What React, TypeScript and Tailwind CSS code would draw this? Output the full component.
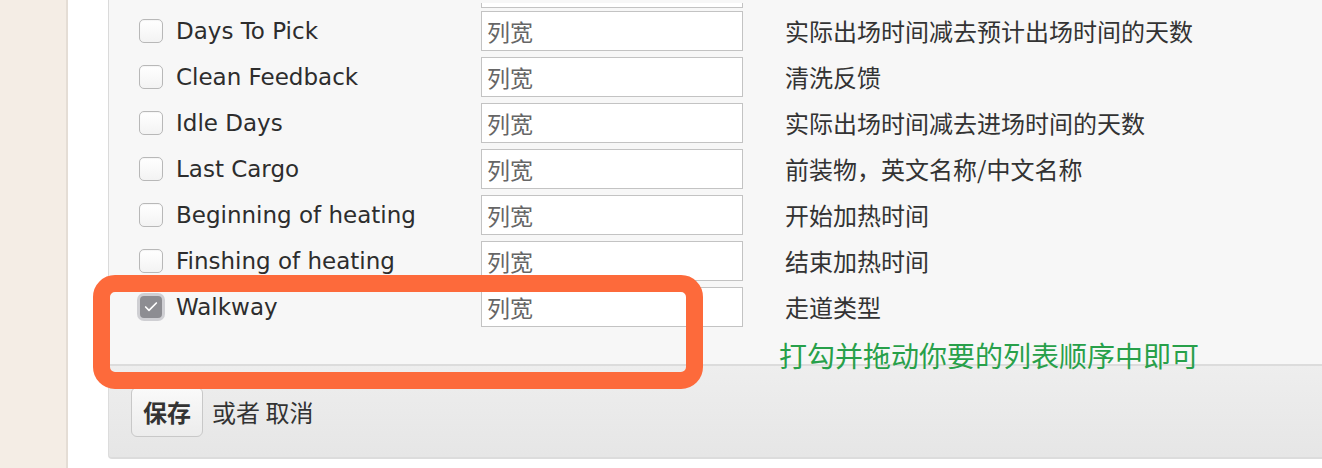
import { Check } from "lucide-react";

const rows = [
	{ label: "Days To Pick", desc: "实际出场时间减去预计出场时间的天数", checked: false },
	{ label: "Clean Feedback", desc: "清洗反馈", checked: false },
	{ label: "Idle Days", desc: "实际出场时间减去进场时间的天数", checked: false },
	{ label: "Last Cargo", desc: "前装物，英文名称/中文名称", checked: false },
	{ label: "Beginning of heating", desc: "开始加热时间", checked: false },
	{ label: "Finshing of heating", desc: "结束加热时间", checked: false },
	{ label: "Walkway", desc: "走道类型", checked: true },
];

const cjk = "font-['Noto_Sans_CJK_SC',sans-serif]";

function Box({ checked }: { checked: boolean }) {
	if (checked) {
		return (
			<span className="flex h-[28px] w-[28px] shrink-0 items-center justify-center rounded-[7px] border-[3px] border-[#cfcfd3] bg-[#8d8d92]">
				<Check className="h-[16px] w-[16px] text-white" strokeWidth={2.5} />
			</span>
		);
	}
	return (
		<span className="block h-[24px] w-[24px] shrink-0 rounded-[5px] border border-[#b8b8b8] bg-gradient-to-b from-white to-[#f3f3f3] shadow-[inset_0_1px_1px_rgba(0,0,0,0.04)]" />
	);
}

export default function App() {
	return (
		<div className="relative h-[468px] w-[1322px] overflow-hidden bg-white">
			<div className="flex h-full">
				{/* beige side */}
				<div className="w-[66px] shrink-0 bg-[#f4ede5]" />
				<div className="w-[2px] shrink-0 bg-[#e4ddd5]" />
				<div className="w-[40px] shrink-0 bg-white" />

				{/* form panel */}
				<div className="flex-1">
					<div className="border-l border-[#dadada] bg-[#f7f7f7] pb-[34px] pl-[30px]">
						{/* bottom of the row scrolled above */}
						<div className="flex h-[8px] items-end">
							<div className="ml-[342px] h-[5px] w-[262px] border-x border-b border-[#c3c3c3] bg-white" />
						</div>
						{rows.map((r) => (
							<div key={r.label} className="flex h-[46px] items-center">
								<div className="flex w-[24px] justify-center">
									<Box checked={r.checked} />
								</div>
								<span className="ml-[13px] w-[305px] font-['DejaVu_Sans',sans-serif] text-[23px] text-[#2d2d2d]">
									{r.label}
								</span>
								<div
									className={`flex h-[40px] w-[262px] items-center border border-[#c3c3c3] bg-white pl-[5px] text-[23px] text-[#666] ${cjk}`}
								>
									列宽
								</div>
								<span className={`ml-[42px] text-[24px] text-[#333] ${cjk}`}>{r.desc}</span>
							</div>
						))}
					</div>

					{/* footer */}
					<div className="flex h-[95px] items-center rounded-bl-[4px] border-t-2 border-b-2 border-l border-[#dcdcdc] bg-gradient-to-b from-[#eeeeee] to-[#e6e6e6] pl-[22px]">
						<button
							className={`h-[50px] rounded-[6px] border border-[#c8c8c8] bg-gradient-to-b from-[#fafafa] to-[#ececec] px-[11px] text-[24px] font-bold text-[#333] ${cjk}`}
						>
							保存
						</button>
						<span className={`ml-[9px] text-[24px] text-[#333] ${cjk}`}>或者 取消</span>
					</div>
				</div>
			</div>

			{/* annotations */}
			<div className="absolute left-[93px] top-[275px] h-[114px] w-[610px] rounded-[22px] border-[17px] border-[#fd6a3b]" />
			<div className={`absolute left-[779px] top-[341px] text-[28px] leading-none text-[#28a04a] ${cjk}`}>
				打勾并拖动你要的列表顺序中即可
			</div>
		</div>
	);
}
